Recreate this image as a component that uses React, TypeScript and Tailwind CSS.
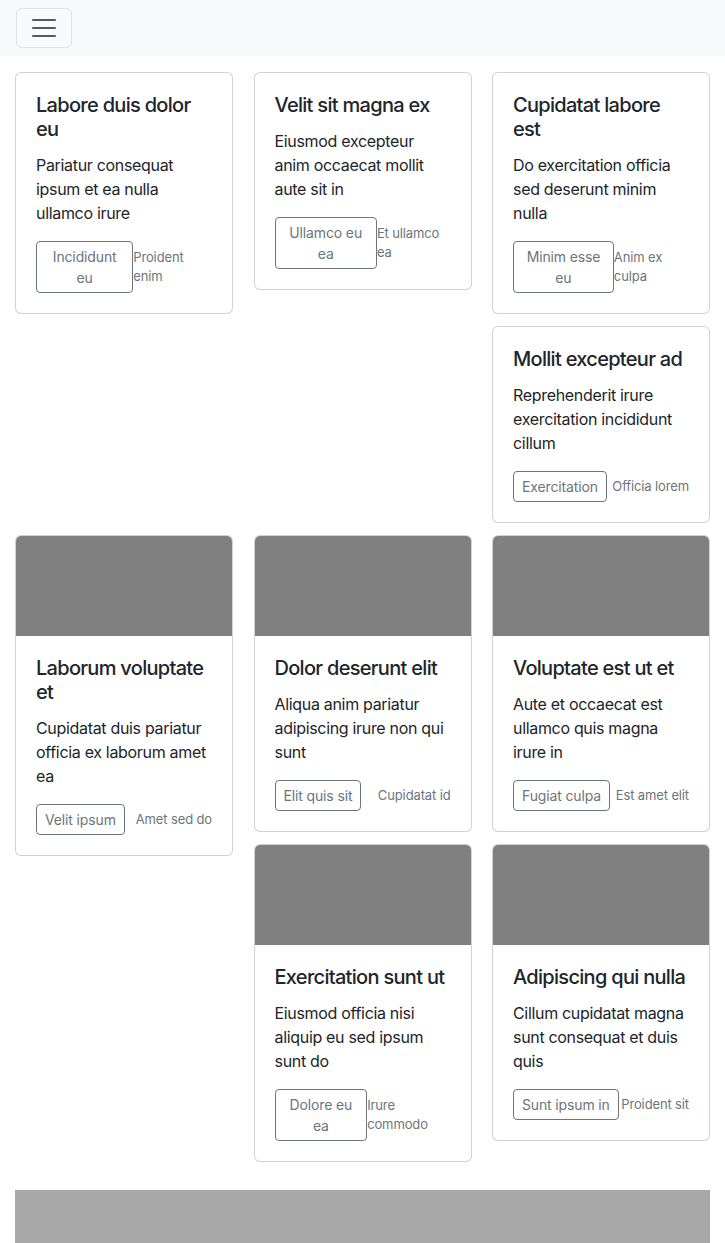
import React from "react";

type Card = {
  title: string;
  text: string;
  btn: string;
  note: string;
  img?: boolean;
};

function CardView({ c }: { c: Card }) {
  return (
    <div className="flex flex-col rounded-[6px] border border-[rgba(0,0,0,0.175)] bg-white overflow-hidden">
      {c.img && <div className="h-[100px] bg-[#808080]" />}
      <div className="p-[20px]">
        <h5 className="text-[20px] leading-[24px] font-medium text-[#212529] mb-[12px] tracking-[-0.035em]">{c.title}</h5>
        <p className="text-[16px] leading-[24px] text-[#212529] mb-[16px] tracking-[-0.02em]">{c.text}</p>
        <div className="flex items-center justify-between">
          <button className="border border-[#6c757d] text-[#6c757d] rounded-[4px] px-[8px] py-[4px] text-[14px] leading-[21px] bg-transparent tracking-[-0.01em]">
            {c.btn}
          </button>
          <small className="text-[13px] leading-[19.5px] text-[#6c757d] tracking-[-0.01em]">{c.note}</small>
        </div>
      </div>
    </div>
  );
}

function Col({ cards }: { cards: Card[] }) {
  return (
    <div className="flex flex-col gap-[12px]">
      {cards.map((c, i) => (
        <CardView key={i} c={c} />
      ))}
    </div>
  );
}

const s1: Card[][] = [
  [{ title: "Labore duis dolor eu", text: "Pariatur consequat ipsum et ea nulla ullamco irure", btn: "Incididunt eu", note: "Proident enim" }],
  [{ title: "Velit sit magna ex", text: "Eiusmod excepteur anim occaecat mollit aute sit in", btn: "Ullamco eu ea", note: "Et ullamco ea" }],
  [
    { title: "Cupidatat labore est", text: "Do exercitation officia sed deserunt minim nulla", btn: "Minim esse eu", note: "Anim ex culpa" },
    { title: "Mollit excepteur ad", text: "Reprehenderit irure exercitation incididunt cillum", btn: "Exercitation", note: "Officia lorem" },
  ],
];

const s2: Card[][] = [
  [{ img: true, title: "Laborum voluptate et", text: "Cupidatat duis pariatur officia ex laborum amet ea", btn: "Velit ipsum", note: "Amet sed do" }],
  [
    { img: true, title: "Dolor deserunt elit", text: "Aliqua anim pariatur adipiscing irure non qui sunt", btn: "Elit quis sit", note: "Cupidatat id" },
    { img: true, title: "Exercitation sunt ut", text: "Eiusmod officia nisi aliquip eu sed ipsum sunt do", btn: "Dolore eu ea", note: "Irure commodo" },
  ],
  [
    { img: true, title: "Voluptate est ut et", text: "Aute et occaecat est ullamco quis magna irure in", btn: "Fugiat culpa", note: "Est amet elit" },
    { img: true, title: "Adipiscing qui nulla", text: "Cillum cupidatat magna sunt consequat et duis quis", btn: "Sunt ipsum in", note: "Proident sit" },
  ],
];

export default function App() {
  return (
    <div className="min-h-[1243px] bg-white" style={{ fontFamily: "Inter, 'Noto Sans', sans-serif" }}>
      <nav className="h-[56px] bg-[#f8f9fa] flex items-center px-[16px]">
        <button className="w-[56px] h-[40px] border border-[rgba(0,0,0,0.1)] rounded-[6px] flex items-center justify-center">
          <svg width="30" height="30" viewBox="0 0 30 30">
            <path d="M4 7h22M4 15h22M4 23h22" stroke="rgba(33,37,41,0.75)" strokeWidth="2" strokeLinecap="round" />
          </svg>
        </button>
      </nav>
      <div className="px-[15px] pt-[16px] flex flex-col gap-[12px]">
        <div className="grid grid-cols-3 gap-x-[20.5px] items-start">
          {s1.map((col, i) => (
            <Col key={i} cards={col} />
          ))}
        </div>
        <div className="grid grid-cols-3 gap-x-[20.5px] items-start">
          {s2.map((col, i) => (
            <Col key={i} cards={col} />
          ))}
        </div>
        <div className="mt-[16px] h-[60px] bg-[#a9a9a9]" />
      </div>
    </div>
  );
}
